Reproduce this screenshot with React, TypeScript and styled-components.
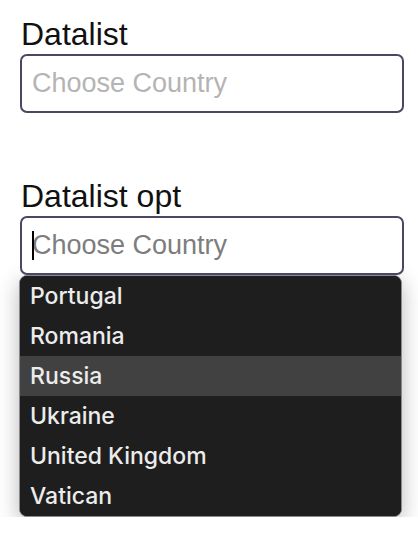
import styled, { createGlobalStyle } from "styled-components";

/*--------------------------
    Styled
--------------------------*/
const Global = createGlobalStyle`
    html, body {
        margin: 0;
        padding: 0;
        background: #fff;
        overflow: hidden;
    }
`;

const Page = styled.div`
    display: flex;
    flex-direction: column;
    padding: 15px 14px 0 20px;
    font-family: "Liberation Sans", Arial, sans-serif;
`;

const Field = styled.div<{ $gap?: number }>`
    display: flex;
    flex-direction: column;
    margin: ${(p) => p.$gap ?? 0}px 0 0 0;
`;

const Label = styled.label`
    padding: 0 0 0 1px;
    color: #111;
    font-size: 32px;
    line-height: 39px;
`;

const InputWrap = styled.div`
    position: relative;
    width: 384px;
`;

const Input = styled.input<{ $focused?: boolean }>`
    display: block;
    box-sizing: border-box;
    width: 384px;
    height: 59px;
    padding: 0 10px;
    border: 2px solid #4b4662;
    border-radius: 7px;
    outline: none;
    background: #fff;
    color: #222;
    font-family: inherit;
    font-size: 27px;

    &::placeholder {
        color: ${(p) => (p.$focused ? "#7d7d7d" : "#b4b4b4")};
    }
`;

const Caret = styled.span`
    position: absolute;
    top: 15px;
    left: 12px;
    width: 2px;
    height: 29px;
    background: #000;
`;

const CountryList = styled.div`
    box-sizing: border-box;
    width: 383px;
    margin: 0 0 0 -1px;
    border: 1px solid #8a8a8e;
    border-radius: 8px;
    background-color: #1e1e1e;
    box-shadow: 0 6px 22px rgba(0, 0, 0, 0.28);
`;

const CountryRow = styled.div<{ $active?: boolean }>`
    display: flex;
    height: 40px;
    padding: 0 0 0 10px;
    align-items: center;
    background-color: ${(p) => (p.$active ? "#414141" : "#1e1e1e")};
    color: #ececec;
    font-family: Inter, "Liberation Sans", sans-serif;
    font-size: 23px;
    font-weight: 500;

    &:first-child {
        border-radius: 7px 7px 0 0;
    }

    &:last-child {
        border-radius: 0 0 7px 7px;
    }
`;

/*--------------------------
    Main
--------------------------*/
const countries = ["Portugal", "Romania", "Russia", "Ukraine", "United Kingdom", "Vatican"];

const App = () => {
    return (
        <>
            <Global />
            <Page>
                <Field>
                    <Label>Datalist</Label>
                    <Input placeholder="Choose Country" />
                </Field>
                <Field $gap={64}>
                    <Label>Datalist opt</Label>
                    <InputWrap>
                        <Input $focused placeholder="Choose Country" />
                        <Caret />
                    </InputWrap>
                    <CountryList>
                        {countries.map((c) => (
                            <CountryRow key={c} $active={c === "Russia"}>
                                {c}
                            </CountryRow>
                        ))}
                    </CountryList>
                </Field>
            </Page>
        </>
    );
};

export default App;
